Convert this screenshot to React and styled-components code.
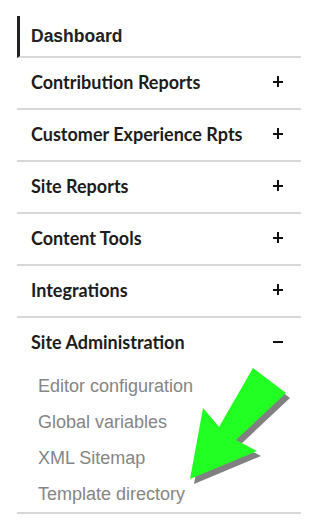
import React, { useState } from 'react';
import styled, { createGlobalStyle } from 'styled-components';

const sections = [
  { id: 'contrib', title: 'Contribution Reports', items: [] },
  { id: 'cx', title: 'Customer Experience Rpts', items: [] },
  { id: 'site', title: 'Site Reports', items: [] },
  { id: 'content', title: 'Content Tools', items: [] },
  { id: 'integrations', title: 'Integrations', items: [] },
  {
    id: 'admin',
    title: 'Site Administration',
    items: ['Editor configuration', 'Global variables', 'XML Sitemap', 'Template directory'],
  },
];

const GlobalStyle = createGlobalStyle`
  html, body {
    margin: 0;
    padding: 0;
    background: #fff;
  }
  * { box-sizing: border-box; }
`;

const SideNav = () => {
  const [open, setOpen] = useState('admin');

  return (
    <Wrapper>
      <Nav>
        <DashboardLink>Dashboard</DashboardLink>
        {sections.map(s => (
          <Section key={s.id}>
            <SectionHeader onClick={() => setOpen(open === s.id ? null : s.id)}>
              <span>{s.title}</span>
              <Toggle $open={open === s.id} />
            </SectionHeader>
            {open === s.id && s.items.length > 0 && (
              <SubList>
                {s.items.map(item => (
                  <SubItem key={item}>{item}</SubItem>
                ))}
              </SubList>
            )}
          </Section>
        ))}
      </Nav>
      <Arrow viewBox="0 0 318 526" aria-hidden="true">
        <polygon
          points="190,479 203,408 219,427 253,368 286,393 236,440 257,451"
          fill="#808080"
          transform="translate(4 5)"
        />
        <polygon
          points="190,479 203,408 219,427 253,368 286,393 236,440 257,451"
          fill="#22ff22"
        />
      </Arrow>
    </Wrapper>
  );
};

export default function App() {
  return (
    <>
      <GlobalStyle />
      <SideNav />
    </>
  );
}

const Wrapper = styled.div`
  position: relative;
  width: 318px;
  height: 526px;
  padding: 16px 17px 0 17px;
`;

const Nav = styled.nav`
  width: 284px;
  display: flex;
  flex-direction: column;
`;

const DashboardLink = styled.div`
  height: 42px;
  display: flex;
  align-items: center;
  padding-left: 11px;
  border-left: 3px solid #222;
  border-bottom: 2px solid #d8d8d8;
  font-family: 'Liberation Sans', Arial, sans-serif;
  font-weight: bold;
  font-size: 17.5px;
  color: #222;
`;

const Section = styled.div`
  border-bottom: 2px solid #d8d8d8;
`;

const SectionHeader = styled.div`
  height: 50px;
  display: flex;
  align-items: center;
  justify-content: space-between;
  padding: 0 18px 3px 14px;
  font-family: Lato, 'Noto Sans', sans-serif;
  font-weight: 700;
  font-size: 18px;
  color: #1c1c1c;
  cursor: pointer;
`;

/* plus / minus drawn with two bars */
const Toggle = styled.span`
  position: relative;
  width: 10px;
  height: 11px;

  &::before,
  &::after {
    content: '';
    position: absolute;
    background: #111;
  }
  &::before {
    left: 0;
    right: 0;
    top: 5px;
    height: 1.5px;
  }
  &::after {
    display: ${p => (p.$open ? 'none' : 'block')};
    top: 0;
    bottom: 0;
    left: 4.25px;
    width: 1.5px;
  }
`;

const SubList = styled.div`
  display: flex;
  flex-direction: column;
`;

const SubItem = styled.div`
  height: 36px;
  display: flex;
  align-items: center;
  padding-left: 21px;
  font-family: 'Liberation Sans', Arial, sans-serif;
  font-size: 18px;
  color: #858585;
`;

const Arrow = styled.svg`
  position: absolute;
  left: 0;
  top: 0;
  width: 318px;
  height: 526px;
  pointer-events: none;
`;
